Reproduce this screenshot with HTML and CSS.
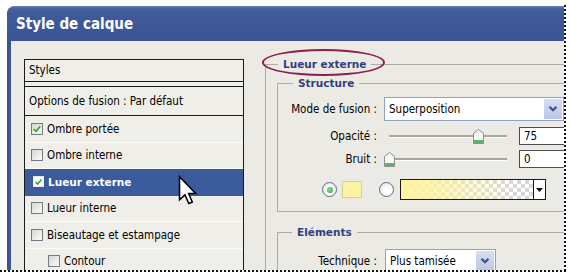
FILE: index.html
```html
<!DOCTYPE html>
<html lang="fr">
<head>
<meta charset="utf-8">
<title>Style de calque</title>
<link rel="stylesheet" href="styles.css">
</head>
<body>
<div class="stage">
  <div class="viewport">
    <div class="window">
      <div class="titlebar">Style de calque</div>
      <div class="body">
        <div class="list">
          <div class="list-head">Styles</div>
          <div class="list-opt">Options de fusion : Par défaut</div>
          <div class="item"><span class="cb"><svg viewBox="0 0 12 12" width="10" height="10"><path d="M2 6 L4.8 8.8 L10 2.6" fill="none" stroke="#2ea32e" stroke-width="2"/></svg></span>Ombre portée</div>
          <div class="item"><span class="cb"></span>Ombre interne</div>
          <div class="item selected"><span class="cb"><svg viewBox="0 0 12 12" width="10" height="10"><path d="M2 6 L4.8 8.8 L10 2.6" fill="none" stroke="#2ea32e" stroke-width="2"/></svg></span>Lueur externe</div>
          <div class="item"><span class="cb"></span>Lueur interne</div>
          <div class="item"><span class="cb"></span>Biseautage et estampage</div>
          <div class="item sub"><span class="cb"></span>Contour</div>
        </div>
        <div class="panel">
          <fieldset class="outer">
            <legend>Lueur externe</legend>
            <fieldset class="group structure">
              <legend>Structure</legend>
              <div class="row r-mode">
                <label>Mode de fusion :</label>
                <div class="select wide"><span class="val">Superposition</span><span class="drop"><svg viewBox="0 0 10 8" width="10" height="8"><path d="M1.5 1.8 L5 5.3 L8.5 1.8" fill="none" stroke="#3f527f" stroke-width="2.2"/></svg></span></div>
              </div>
              <div class="row r-slider r-op">
                <label>Opacité :</label>
                <div class="track"><svg class="thumb" style="left:84px" viewBox="0 0 11 15" width="11" height="15"><path d="M0.5 4.5 L5.5 0.5 L10.5 4.5 L10.5 14.5 L0.5 14.5 Z" fill="#f7f7f4" stroke="#8d9089"/><rect x="1" y="11" width="9" height="3" fill="#5fae73"/></svg></div>
                <div class="num">75</div>
              </div>
              <div class="row r-slider r-noise">
                <label>Bruit :</label>
                <div class="track"><svg class="thumb" style="left:-5px" viewBox="0 0 11 15" width="11" height="15"><path d="M0.5 4.5 L5.5 0.5 L10.5 4.5 L10.5 14.5 L0.5 14.5 Z" fill="#f7f7f4" stroke="#8d9089"/><rect x="1" y="11" width="9" height="3" fill="#5fae73"/></svg></div>
                <div class="num">0</div>
              </div>
              <div class="row r-color">
                <span class="radio on"><span class="dot"></span></span>
                <span class="swatch"></span>
                <span class="radio second"></span>
                <div class="gradient"><span class="grad"></span><span class="gdrop"><svg viewBox="0 0 7 4" width="7" height="4"><path d="M0 0 L7 0 L3.5 4 Z" fill="#111"/></svg></span></div>
              </div>
            </fieldset>
            <fieldset class="group elements">
              <legend>Eléments</legend>
              <div class="row r-tech">
                <label>Technique :</label>
                <div class="select small"><span class="val">Plus tamisée</span><span class="drop"><svg viewBox="0 0 10 8" width="10" height="8"><path d="M1.5 1.8 L5 5.3 L8.5 1.8" fill="none" stroke="#3f527f" stroke-width="2.2"/></svg></span></div>
              </div>
            </fieldset>
          </fieldset>
        </div>
      </div>
    </div>
  </div>
  <span class="annot"></span>
  <svg class="cursor" viewBox="0 0 13 20" width="20" height="31"><path d="M1 1 L1 16 L4.5 12.8 L7 18.5 L9.3 17.5 L6.9 12 L11.5 12 Z" fill="#fff" stroke="#000" stroke-width="1" stroke-linejoin="miter"/></svg>
</div>
</body>
</html>
```
FILE: styles.css
```css
body {
  margin: 0;
  background: #fff;
  font-family: "DejaVu Sans Condensed", "DejaVu Sans", sans-serif;
  font-size: 11.5px;
  color: #000;
}

.stage {
  position: relative;
  width: 566px;
  height: 272px;
}

.viewport {
  width: 564px;
  height: 270px;
  overflow: hidden;
  padding: 6px 0 0 7px;
  box-sizing: border-box;
}

.stage::before {
  content: "";
  position: absolute;
  left: 564px;
  top: 5px;
  width: 2px;
  height: 267px;
  background: repeating-linear-gradient(to bottom, #111 0 2px, transparent 2px 4px);
}

.stage::after {
  content: "";
  position: absolute;
  left: 0;
  top: 270px;
  width: 566px;
  height: 2px;
  background: repeating-linear-gradient(to right, #111 0 2px, transparent 2px 4px);
}

.window {
  width: 600px;
  height: 300px;
  background: #3d5597;
  border-top-left-radius: 8px;
  display: flex;
  flex-direction: column;
}

.titlebar {
  flex: none;
  height: 35px;
  box-sizing: border-box;
  padding: 9px 0 0 9px;
  border-top-left-radius: 8px;
  background: linear-gradient(to bottom, #7088c6 0, #4a63a5 2px, #405999 7px, #3b5495 100%);
  color: #fff;
  font-family: "DejaVu Sans Condensed", "DejaVu Sans", sans-serif;
  font-weight: bold;
  font-size: 15px;
  line-height: 18px;
}

.body {
  flex: 1;
  margin-left: 4px;
  background: #eceae4;
  display: flex;
  align-items: flex-start;
  padding: 16px 0 0 13px;
}

/* ---------- list ---------- */
.list {
  flex: none;
  width: 220px;
  margin-top: 2px;
  box-sizing: border-box;
  border: 1px solid #1a1a1a;
  border-bottom: none;
  background: #efeee9;
}

.list-head {
  height: 21px;
  line-height: 21px;
  padding-left: 4px;
  border-bottom: 1px solid #1a1a1a;
}

.list-opt {
  margin-top: 4px;
  height: 28px;
  line-height: 28px;
  padding-left: 4px;
  border-top: 1px solid #1a1a1a;
  border-bottom: 1px solid #1a1a1a;
}

.item {
  height: 26.5px;
  box-sizing: border-box;
  display: flex;
  align-items: center;
  gap: 4px;
  padding-left: 6px;
  border-bottom: 1px solid #fbfbf8;
}

.item.sub {
  padding-left: 23px;
}

.cb {
  width: 12px;
  height: 12px;
  box-sizing: border-box;
  border: 1px solid #6f7b86;
  background: linear-gradient(135deg, #d6d6d0, #fbfbf9);
  display: inline-flex;
  align-items: center;
  justify-content: center;
}

.item.selected {
  background: #3b5b9d;
  color: #fff;
  font-family: "DejaVu Sans", sans-serif;
  font-weight: bold;
  font-size: 10.5px;
  border-bottom-color: #3b5b9d;
  padding-left: 8px;
}

.item.selected .cb {
  width: 11px;
  height: 11px;
  background: #fff;
  border-color: #e4e9f2;
}

/* ---------- right panel ---------- */
.panel {
  margin-left: 21px;
}

fieldset {
  margin: 0;
  min-width: 0;
  border: 1px solid #aeaca4;
}

legend {
  padding: 0 5px;
  font-family: "DejaVu Sans", sans-serif;
  font-weight: bold;
  font-size: 10.5px;
  line-height: 14px;
  color: #343e7c;
}

.outer {
  width: 330px;
  height: 260px;
  box-sizing: border-box;
  padding: 5px 0 0 11px;
}

.outer > legend {
  margin-left: 1px;
}

.group {
  padding: 7px 0 11px 0;
}

.group > legend {
  margin-left: 15px;
}

.elements {
  margin-top: 13px;
  padding-top: 10px;
}

.elements > legend {
  margin-left: 14px;
}

.row {
  display: flex;
  align-items: center;
}

.row label {
  flex: none;
  width: 99px;
  padding-right: 1px;
  margin-right: 6px;
  text-align: right;
}

.r-mode { height: 24px; }
.r-op { height: 18px; margin-top: 6px; }
.r-noise { height: 18px; margin-top: 5px; }
.r-color { height: 21px; margin-top: 11px; padding-left: 44px; }
.r-tech { height: 24px; }

.select {
  height: 24px;
  box-sizing: border-box;
  border: 1px solid #8fa2bf;
  background: #fff;
  display: flex;
  align-items: center;
}

.select.wide { width: 180px; }
.select.small { width: 111px; margin-left: 1px; }

.select .val {
  flex: 1;
  padding-left: 4px;
}

.select .drop {
  width: 18px;
  height: 20px;
  margin-right: 1px;
  background: linear-gradient(to bottom, #d7def4, #bcc7e6);
  display: flex;
  align-items: center;
  justify-content: center;
}

.track {
  position: relative;
  width: 118px;
  height: 18px;
  margin-left: 5px;
  background: linear-gradient(to bottom, transparent 8px, #a9a8a0 8px, #a9a8a0 10px, #fff 10px, #fff 11px, transparent 11px);
}

.thumb {
  position: absolute;
  top: 2px;
}

.num {
  width: 46px;
  height: 18px;
  box-sizing: border-box;
  margin-left: 12px;
  border: 1px solid #4d4d4d;
  background: #fff;
  padding-left: 4px;
  line-height: 16px;
}

.radio {
  width: 15px;
  height: 15px;
  box-sizing: border-box;
  border-radius: 50%;
  border: 1px solid #55708e;
  background: radial-gradient(circle at 60% 60%, #fff 30%, #dcdcd4 100%);
  display: inline-flex;
  align-items: center;
  justify-content: center;
}

.radio .dot {
  width: 6px;
  height: 6px;
  border-radius: 50%;
  background: radial-gradient(circle at 40% 40%, #8be08f, #2f9a3c);
}

.swatch {
  width: 20px;
  height: 17px;
  margin-left: 5px;
  box-sizing: border-box;
  border: 1px solid #d6cf9a;
  background: #fbf2a6;
}

.radio.second {
  margin-left: 17px;
}

.gradient {
  width: 146px;
  height: 21px;
  margin-left: 6px;
  box-sizing: border-box;
  border: 1px solid #1a1a1a;
  display: flex;
}

.grad {
  flex: 1;
  background:
    linear-gradient(to right, #fdf5a0 0%, rgba(253, 245, 160, 0.75) 30%, rgba(253, 245, 160, 0) 85%),
    repeating-conic-gradient(#d8d8d8 0 25%, #fff 0 50%) 0 0 / 8px 8px;
}

.gdrop {
  width: 11px;
  border-left: 1px solid #1a1a1a;
  background: #fff;
  display: flex;
  align-items: center;
  justify-content: center;
}

/* ---------- overlays ---------- */
.annot {
  position: absolute;
  left: 262px;
  top: 49px;
  width: 123px;
  height: 27px;
  box-sizing: border-box;
  border: 2px solid #8c1f4e;
  border-radius: 50%;
}

.cursor {
  position: absolute;
  left: 178px;
  top: 175px;
}
```
